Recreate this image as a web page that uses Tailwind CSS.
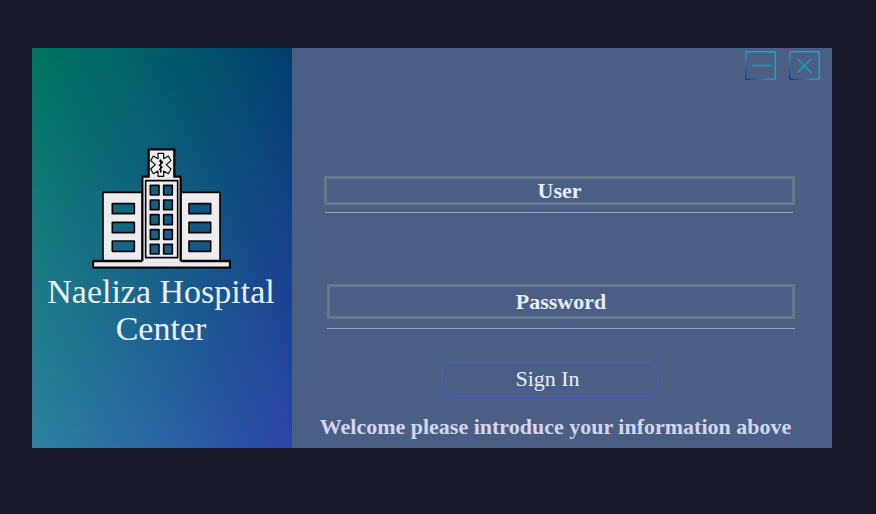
<!DOCTYPE html>
<html lang="en">
<head>
<meta charset="utf-8">
<meta name="viewport" content="width=device-width, initial-scale=1">
<title>Naeliza Hospital Center</title>
<script src="https://cdn.jsdelivr.net/npm/@tailwindcss/browser@4"></script>
</head>
<body class="min-h-screen bg-[#171a2a] pt-12 pr-11 pb-16 pl-8 font-['Liberation_Serif',serif]">
<main class="flex min-h-100">
  <aside class="relative isolate w-[260px] shrink-0 bg-linear-to-r from-[#00765f] to-[#003e6e] pt-[100px] pr-[10px] pl-2">
    <div class="absolute inset-0 -z-10 bg-linear-to-r from-[#2c809f] to-[#2c45a8] [mask-image:linear-gradient(to_bottom,transparent,black)]"></div>
    <svg class="mx-auto h-[121px] w-[139px]" viewBox="36 24 417 363" fill="none" stroke="#08080c" stroke-linejoin="round" aria-hidden="true">
      <g fill="#ededf0" fill-rule="evenodd" stroke-width="5">
        <path d="M69 157H188V363H69ZM97 191H163V221H97ZM97 247H163V278H97ZM97 303H163V334H97Z"/>
        <path d="M302 157H420V363H302ZM327 191H392V221H327ZM327 247H392V278H327ZM327 303H392V334H327Z"/>
      </g>
      <path d="M39 363H450V383H39Z" fill="#ededf0" stroke-width="7"/>
      <path fill="#ededf0" fill-rule="evenodd" stroke="none" d="M206 28H283V110H302V368H187V110H206ZM211 136H237V165H211ZM251 136H277V165H251ZM211 180H237V209H211ZM251 180H277V209H251ZM211 224H237V254H211ZM251 224H277V254H251ZM211 269H237V298H211ZM251 269H277V298H251ZM211 313H237V342H211ZM251 313H277V342H251Z"/>
      <path stroke-width="7" d="M187 363V110H206V28H283V110H302V363"/>
      <path stroke-width="5" d="M197 122H293V353H197Z"/>
      <path stroke-width="5" d="M211 136H237V165H211ZM251 136H277V165H251ZM211 180H237V209H211ZM251 180H277V209H251ZM211 224H237V254H211ZM251 224H277V254H251ZM211 269H237V298H211ZM251 269H277V298H251ZM211 313H237V342H211ZM251 313H277V342H251Z"/>
      <path stroke-width="3.5" d="M234 40H251V56L265 48L273 62L259 74L273 87L265 101L251 93V109H234V93L220 101L212 87L226 74L212 62L220 48L234 56Z"/>
      <path stroke-width="4" stroke-linecap="round" d="M242 60V96M239 63Q250 62 246 70L238 76L246 82L239 88L244 93"/>
    </svg>
    <h1 class="pt-1 text-center text-[34px] leading-[37px] text-[#e9f0fb]">Naeliza Hospital Center</h1>
  </aside>

  <section class="flex min-w-0 flex-1 flex-col bg-[#4b5e84]">
    <header class="flex justify-end gap-[13px] pt-[3px] pr-3">
      <button type="button" aria-label="Minimize" class="h-[29px] w-[31px]">
        <svg class="size-full" viewBox="0 0 31 29" fill="none">
          <defs>
            <linearGradient id="edge" gradientUnits="userSpaceOnUse" x1="0" y1="29" x2="24" y2="6"><stop stop-color="#063c8c"/><stop offset=".5" stop-color="#1899b8"/><stop offset="1" stop-color="#12a8c4"/></linearGradient>
          </defs>
          <path d="M.75 .75H30.25V28.25H.75Z" stroke="url(#edge)" stroke-width="1.500"/>
          <path d="M7 14.500H26" stroke="#12a2c0" stroke-width="1.400"/>
        </svg>
      </button>
      <button type="button" aria-label="Close" class="h-[29px] w-[31px]">
        <svg class="size-full" viewBox="0 0 31 29" fill="none">
          <path d="M.75 .75H30.25V28.25H.75Z" stroke="url(#edge)" stroke-width="1.500"/>
          <path d="M8.500 8L22 21.500M22 8L8.500 21.500" stroke="#12a2c0" stroke-width="1.500"/>
        </svg>
      </button>
    </header>

    <form class="flex flex-col pt-24 pr-[37px] pb-[7px] pl-8">
      <input type="text" aria-label="User" placeholder="User" class="h-[29px] w-full border-3 border-[#66778b] text-center text-[22px] leading-6 font-bold text-[#e6edfa] outline-none placeholder:text-[#e6edfa]">
      <hr class="mt-[7px] mr-0.5 ml-px border-[#93a3ba]">

      <div class="mt-[71px] pl-[3px]">
        <input type="password" aria-label="Password" placeholder="Password" class="h-[35px] w-full border-3 border-[#66778b] text-center text-[22px] leading-6 font-bold text-[#e6edfa] outline-none placeholder:text-[#e6edfa]">
        <hr class="mt-[9px] border-[#93a3ba]">
      </div>

      <button type="submit" class="mt-8 mr-5 h-9 w-[218px] self-center rounded-xl border-2 border-[#465db0] pr-1 text-[22px] leading-6 text-[#e6edfa]">Sign In</button>
      <p class="-mx-2 mt-4 pr-2 text-center text-[22px] leading-7 font-bold text-[#d3d6f0]">Welcome please introduce your information above</p>
    </form>
  </section>
</main>
</body>
</html>
